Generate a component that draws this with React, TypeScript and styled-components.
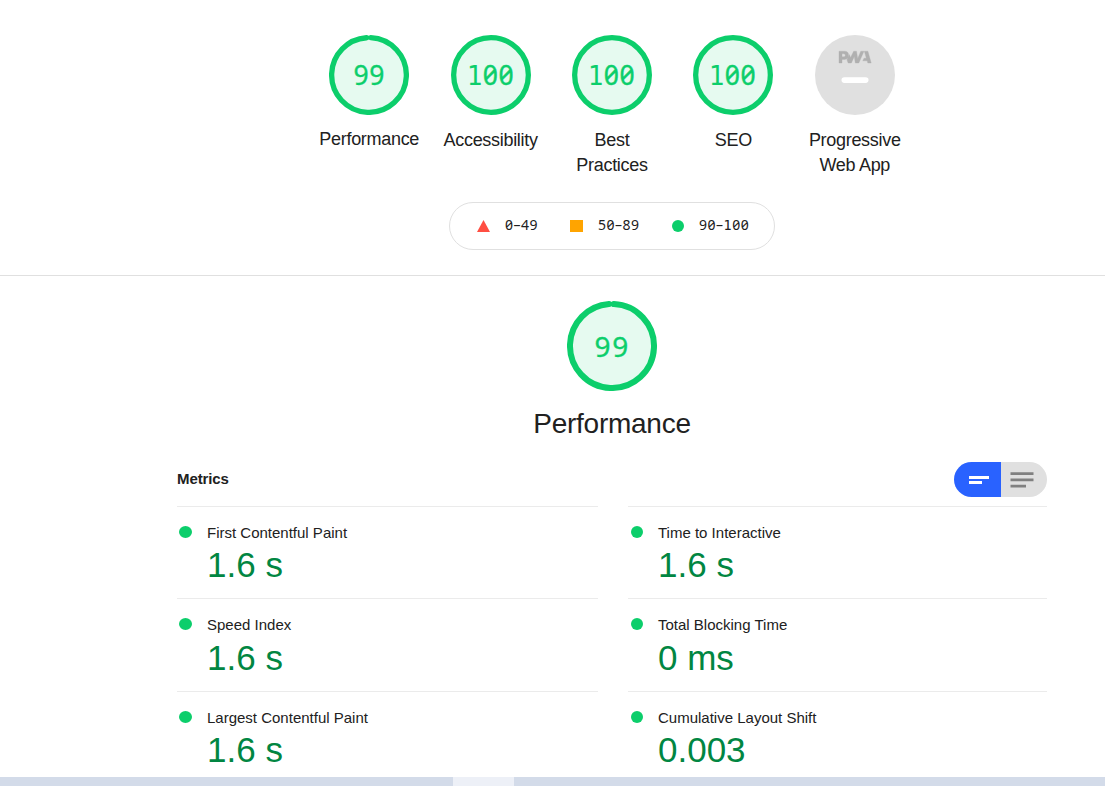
import React from "react";
import styled, { createGlobalStyle } from "styled-components";

const sans = `"Liberation Sans", Arial, sans-serif`;
const mono = `"DejaVu Sans Mono", Consolas, monospace`;
const digits = `"Noto Sans", "Open Sans", sans-serif`;
const GREEN = "#0cce6b";

const Global = createGlobalStyle`
  html, body { margin: 0; padding: 0; background: #fff; }
  *, *::before, *::after { box-sizing: border-box; }
`;

const Page = styled.main`
  width: 1105px;
  height: 786px;
  overflow: hidden;
  display: flex;
  flex-direction: column;
  background: #fff;
  color: #212121;
  font-family: ${sans};
`;

const ScoreHeader = styled.header`
  height: 276px;
  flex: none;
  padding: 35px 0 0 119px;
  border-bottom: 1px solid #e0e0e0;
  display: flex;
  flex-direction: column;
  align-items: center;
`;

const Gauges = styled.div`
  display: flex;
  height: 167px;
`;

const Gauge = styled.div`
  width: 121.4px;
  display: flex;
  flex-direction: column;
  align-items: center;
`;

const GaugeLabel = styled.div<{ $top?: number }>`
  margin-top: ${(p) => p.$top ?? 13}px;
  font-size: 18px;
  line-height: 25px;
  letter-spacing: -0.3px;
  text-align: center;
  white-space: pre-line;
`;

const Dial = styled.svg`
  display: block;
  flex: none;
`;

const Score = styled.text<{ $size: number; $spacing: number }>`
  font-family: ${digits};
  font-feature-settings: "zero" 1, "tnum" 1;
  font-size: ${(p) => p.$size}px;
  letter-spacing: ${(p) => p.$spacing}px;
  fill: ${GREEN};
  stroke: ${GREEN};
  stroke-width: 0.35px;
  text-anchor: middle;
`;

const SerifOneSvg = styled.tspan`
  font-family: ${mono};
  font-size: 0.98em;
  stroke-width: 0;
`;

const SerifOne = styled.span`
  font-family: ${mono};
  font-size: 0.96em;
  line-height: 1;
`;

const Legend = styled.div`
  width: 326px;
  height: 48px;
  border: 1px solid #e0e0e0;
  border-radius: 24px;
  display: flex;
  align-items: center;
  padding-left: 27px;
`;

const LegendItem = styled.span<{ $width: number; $gap: number }>`
  width: ${(p) => p.$width}px;
  display: flex;
  align-items: center;
  gap: ${(p) => p.$gap}px;
  font-family: ${digits};
  font-feature-settings: "zero" 1, "tnum" 1;
  font-size: 14px;
  line-height: 18px;
  letter-spacing: 0.5px;
  white-space: nowrap;
`;

const LegendText = styled.span`
  margin-top: -2px;
`;

const Category = styled.section`
  flex: 1;
  min-height: 0;
  padding: 25px 58px 0 177px;
`;

const CategoryHeader = styled.div`
  display: flex;
  flex-direction: column;
  align-items: center;
`;

const CategoryTitle = styled.h1`
  margin: 15px 0 0;
  font-size: 28px;
  line-height: 36px;
  font-weight: 400;
  letter-spacing: -0.26px;
`;

const MetricsHeader = styled.div`
  margin-top: 20px;
  height: 44px;
  display: flex;
  justify-content: space-between;
  align-items: flex-start;
`;

const MetricsTitle = styled.h2`
  margin: 0;
  font-size: 15px;
  line-height: 34px;
  font-weight: 700;
  letter-spacing: -0.1px;
`;

const Toggle = styled.div`
  width: 93px;
  height: 35px;
  border-radius: 17.5px;
  overflow: hidden;
  display: flex;
`;

const ToggleHalf = styled.span<{ $active?: boolean }>`
  width: ${(p) => (p.$active ? 47 : 46)}px;
  background: ${(p) => (p.$active ? "#2962ff" : "#e0e0e0")};
`;

const MetricGrid = styled.div`
  display: grid;
  grid-template-columns: 421px 419px;
  column-gap: 30px;
  grid-template-rows: 92px 93px 90px;
`;

const Metric = styled.div<{ $indent: number }>`
  border-top: 1px solid #ebebeb;
  padding: 16px 0 0 ${(p) => p.$indent}px;
  display: flex;
  align-items: flex-start;
`;

const Dot = styled.span<{ $width: number }>`
  width: ${(p) => p.$width}px;
  height: 12px;
  margin-top: 3px;
  border-radius: 50%;
  background: ${GREEN};
`;

const MetricBody = styled.div`
  margin-left: 15px;
`;

const MetricName = styled.div`
  font-size: 15px;
  line-height: 20px;
`;

const MetricValue = styled.div<{ $top: number }>`
  margin-top: ${(p) => p.$top}px;
  font-size: 35px;
  line-height: 42px;
  color: #018642;
  white-space: pre;
`;

const Taskbar = styled.footer`
  height: 9px;
  flex: none;
  padding-left: 453px;
  background: #d3dbe9;
`;

const TaskbarItem = styled.div`
  width: 61px;
  height: 9px;
  background: #edf0f7;
`;

interface ScoreDialProps {
  size: number;
  stroke: number;
  value: number;
  font: number;
  spacing: number;
  baseline: number;
  shift?: number;
}

const ScoreDial = ({ size, stroke, value, font, spacing, baseline, shift = 0 }: ScoreDialProps) => {
  const c = size / 2;
  const r = c - stroke / 2;
  const length = 2 * Math.PI * r;
  const partial = value < 100;
  return (
    <Dial width={size} height={size} viewBox={`0 0 ${size} ${size}`}>
      <circle cx={c} cy={c} r={r} fill="#e6faf0" />
      <circle
        cx={c}
        cy={c}
        r={r}
        fill="none"
        stroke={GREEN}
        strokeWidth={stroke}
        strokeLinecap={partial ? "round" : "butt"}
        strokeDasharray={partial ? `${length - stroke + 0.7} ${length}` : undefined}
        transform={partial ? `rotate(-87.5 ${c} ${c})` : undefined}
      />
      <Score $size={font} $spacing={spacing} x={c + spacing / 2 + shift} y={baseline}>
        {partial ? (
          value
        ) : (
          <>
            <SerifOneSvg>1</SerifOneSvg>00
          </>
        )}
      </Score>
    </Dial>
  );
};

const PwaBadge = () => (
  <Dial width="80" height="80" viewBox="0 0 80 80">
    <circle cx="40" cy="40" r="40" fill="#e0e0e0" />
    <g fill="#b0b0b0" stroke="#b0b0b0" strokeWidth="0.35">
      <path fillRule="evenodd" d="M24 16.200h5.500a4 4 0 0 1 0 8.200H27V28h-3zM27 18.800v3h1.800a1.500 1.500 0 0 0 0-3z" />
      <path d="M34.300 19.500L35.600 22.500 38.700 16.200h2.800L42.700 23.400 45.800 16.200H49L43.800 28h-3.500L39.300 21.500 36.400 28h-3.300L32 24.800z" />
      <path d="M49.300 16.200h3.600L56.200 28h-3.400l-.6-2.200h-4.400l1.200-2.600h2.300l-1-3.600z" />
    </g>
    <rect x="26.500" y="42.300" width="27" height="5.600" rx="2.800" fill="#fff" />
  </Dial>
);

const gauges = [
  { label: "Performance", value: 99, top: 12 },
  { label: "Accessibility", value: 100, top: 13 },
  { label: "Best\nPractices", value: 100, top: 13 },
  { label: "SEO", value: 100, top: 13 },
];

const metrics = [
  ["First Contentful Paint", "1.6 s"],
  ["Time to Interactive", "1.6 s"],
  ["Speed Index", "1.6 s"],
  ["Total Blocking Time", "0 ms"],
  ["Largest Contentful Paint", "1.6 s"],
  ["Cumulative Layout Shift", "0.003"],
];

export default function App() {
  return (
    <Page>
      <Global />
      <ScoreHeader>
        <Gauges>
          {gauges.map((g) => (
            <Gauge key={g.label}>
              <ScoreDial
                size={80}
                stroke={5.3}
                value={g.value}
                font={26.5}
                spacing={g.value < 100 ? 0.6 : 0.4}
                baseline={50}
                shift={g.value < 100 ? -0.1 : -0.8}
              />
              <GaugeLabel $top={g.top}>{g.label}</GaugeLabel>
            </Gauge>
          ))}
          <Gauge>
            <PwaBadge />
            <GaugeLabel>{"Progressive\nWeb App"}</GaugeLabel>
          </Gauge>
        </Gauges>
        <Legend>
          <LegendItem $width={93} $gap={15}>
            <svg width="13" height="12"><path d="M6.500 0L13 12H0z" fill="#ff4e42" /></svg>
            <LegendText>0–49</LegendText>
          </LegendItem>
          <LegendItem $width={102} $gap={15}>
            <svg width="13" height="12"><rect width="13" height="12" fill="#ffa400" /></svg>
            <LegendText>50–89</LegendText>
          </LegendItem>
          <LegendItem $width={90} $gap={15}>
            <svg width="12" height="12"><circle cx="6" cy="6" r="6" fill={GREEN} /></svg>
            <LegendText>90–<SerifOne>1</SerifOne>00</LegendText>
          </LegendItem>
        </Legend>
      </ScoreHeader>
      <Category>
        <CategoryHeader>
          <ScoreDial size={90} stroke={6} value={99} font={28} spacing={1.8} baseline={56} shift={-0.6} />
          <CategoryTitle>Performance</CategoryTitle>
        </CategoryHeader>
        <MetricsHeader>
          <MetricsTitle>Metrics</MetricsTitle>
          <Toggle>
            <ToggleHalf $active>
              <svg width="47" height="35">
                <path d="M15 14h20v3H15zM15 19h13v3H15z" fill="#fff" />
              </svg>
            </ToggleHalf>
            <ToggleHalf>
              <svg width="46" height="35">
                <path d="M9.500 10.300h23v2.700h-23zM9.500 16.500h23v2.700h-23zM9.500 22.700h15.500v2.700H9.500z" fill="#808080" />
              </svg>
            </ToggleHalf>
          </Toggle>
        </MetricsHeader>
        <MetricGrid>
          {metrics.map(([name, value], i) => (
            <Metric key={name} $indent={i % 2 ? 3 : 2}>
              <Dot $width={i % 2 ? 12 : 13} />
              <MetricBody>
                <MetricName>{name}</MetricName>
                <MetricValue $top={i === 2 || i === 3 ? 2 : 1}>{value}</MetricValue>
              </MetricBody>
            </Metric>
          ))}
        </MetricGrid>
      </Category>
      <Taskbar>
        <TaskbarItem />
      </Taskbar>
    </Page>
  );
}
